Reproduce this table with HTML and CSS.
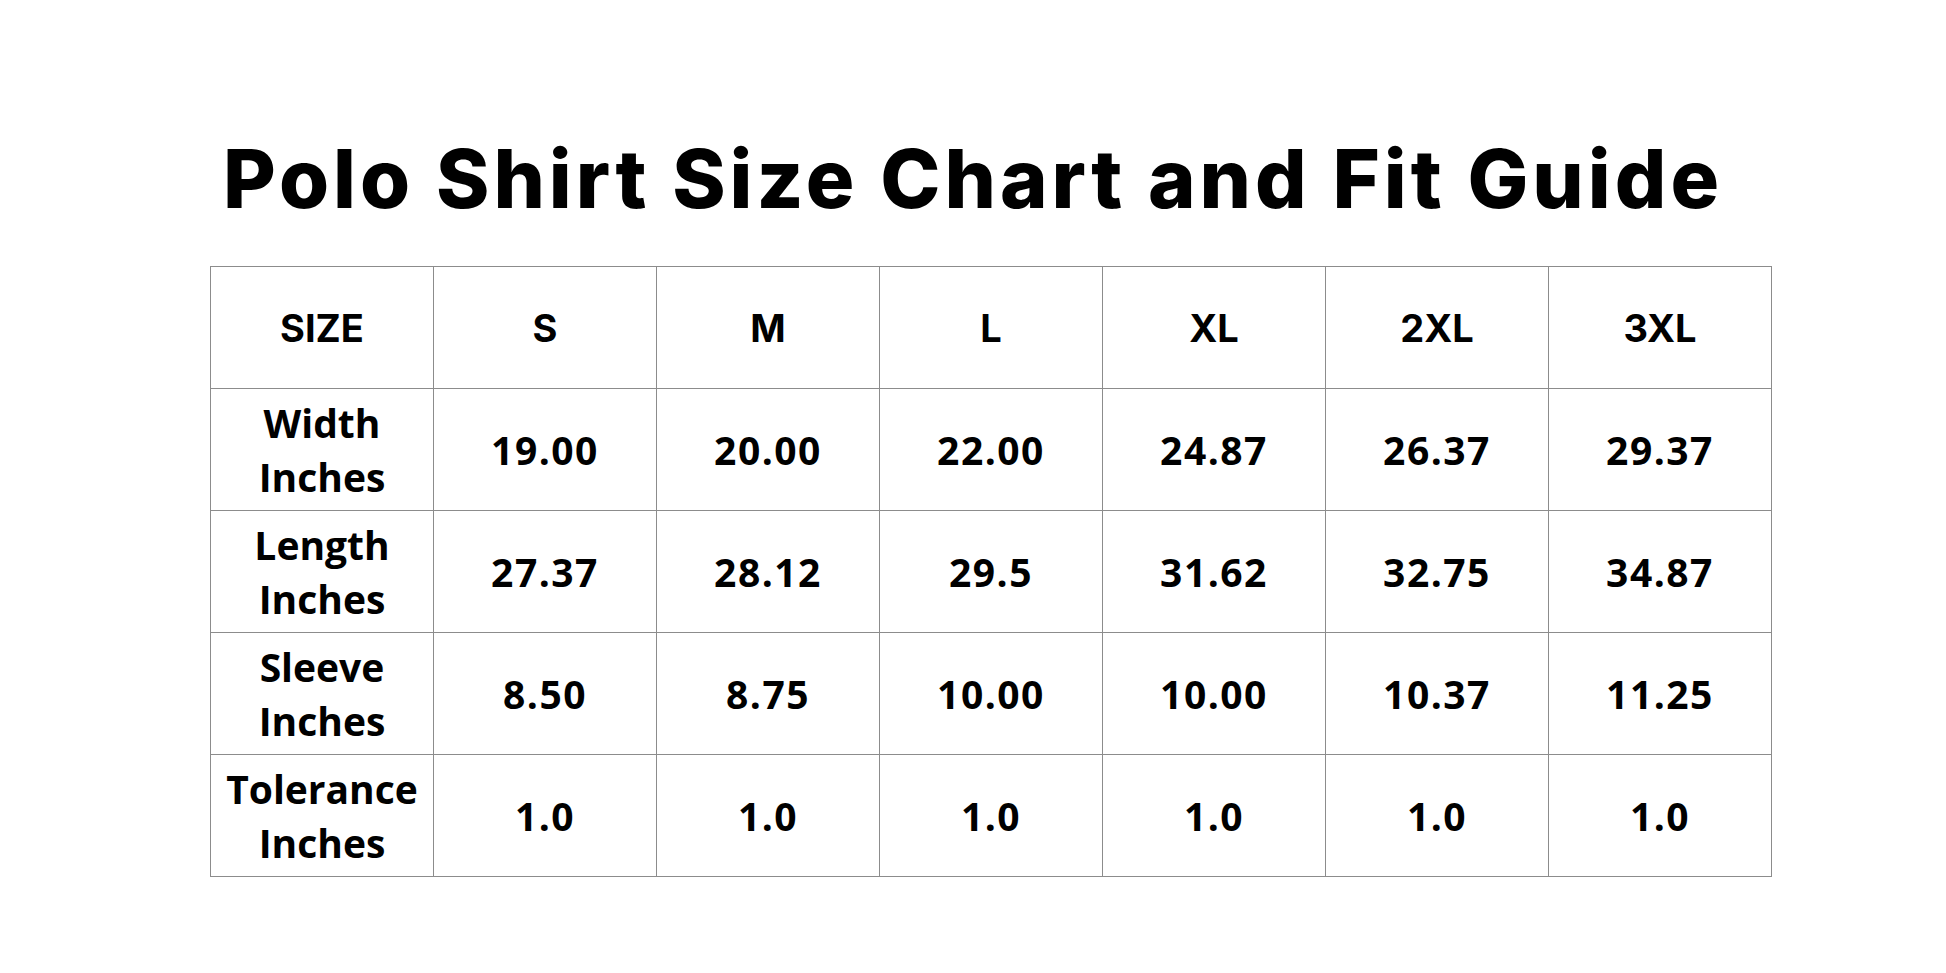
FILE: index.html
```html
<!DOCTYPE html>
<html lang="en">
<head>
<meta charset="utf-8">
<title>Polo Shirt Size Chart and Fit Guide</title>
<link rel="stylesheet" href="styles.css">
</head>
<body>
<main class="page">
  <h1 class="title">Polo Shirt Size Chart and Fit Guide</h1>
  <table class="chart">
    <thead>
      <tr>
        <th class="head label-head">SIZE</th>
        <th class="head">S</th>
        <th class="head">M</th>
        <th class="head">L</th>
        <th class="head">XL</th>
        <th class="head">2XL</th>
        <th class="head">3XL</th>
      </tr>
    </thead>
    <tbody>
      <tr>
        <th class="label">Width<br>Inches</th>
        <td>19.00</td><td>20.00</td><td>22.00</td><td>24.87</td><td>26.37</td><td>29.37</td>
      </tr>
      <tr>
        <th class="label">Length<br>Inches</th>
        <td>27.37</td><td>28.12</td><td>29.5</td><td>31.62</td><td>32.75</td><td>34.87</td>
      </tr>
      <tr>
        <th class="label">Sleeve<br>Inches</th>
        <td>8.50</td><td>8.75</td><td>10.00</td><td>10.00</td><td>10.37</td><td>11.25</td>
      </tr>
      <tr>
        <th class="label">Tolerance<br>Inches</th>
        <td>1.0</td><td>1.0</td><td>1.0</td><td>1.0</td><td>1.0</td><td>1.0</td>
      </tr>
    </tbody>
  </table>
</main>
</body>
</html>
```
FILE: styles.css
```css
html, body {
  margin: 0;
  padding: 0;
  background: #ffffff;
}

.page {
  width: 1946px;
  height: 973px;
  display: flex;
  flex-direction: column;
  align-items: flex-start;
  color: #000;
}

.title {
  align-self: center;
  margin: 129px 0 0 0;
  height: 137px;
  font-family: Inter, "Liberation Sans", sans-serif;
  font-weight: 800;
  font-size: 81px;
  line-height: 100px;
  letter-spacing: 4px;
  white-space: nowrap;
}

.chart {
  margin-left: 210px;
  width: 1562px;
  border-collapse: collapse;
  table-layout: fixed;
}

.chart th,
.chart td {
  border: 1px solid #8c8c8c;
  height: 121px;
  padding: 0;
  text-align: center;
  vertical-align: middle;
  font-family: "Open Sans", "Noto Sans", sans-serif;
  font-weight: 700;
  font-size: 39px;
  line-height: 54px;
}

.chart td {
  letter-spacing: 1.5px;
}

.chart .head {
  font-family: Inter, "Liberation Sans", sans-serif;
  font-weight: 700;
  font-size: 38px;
  letter-spacing: 0;
}
```
